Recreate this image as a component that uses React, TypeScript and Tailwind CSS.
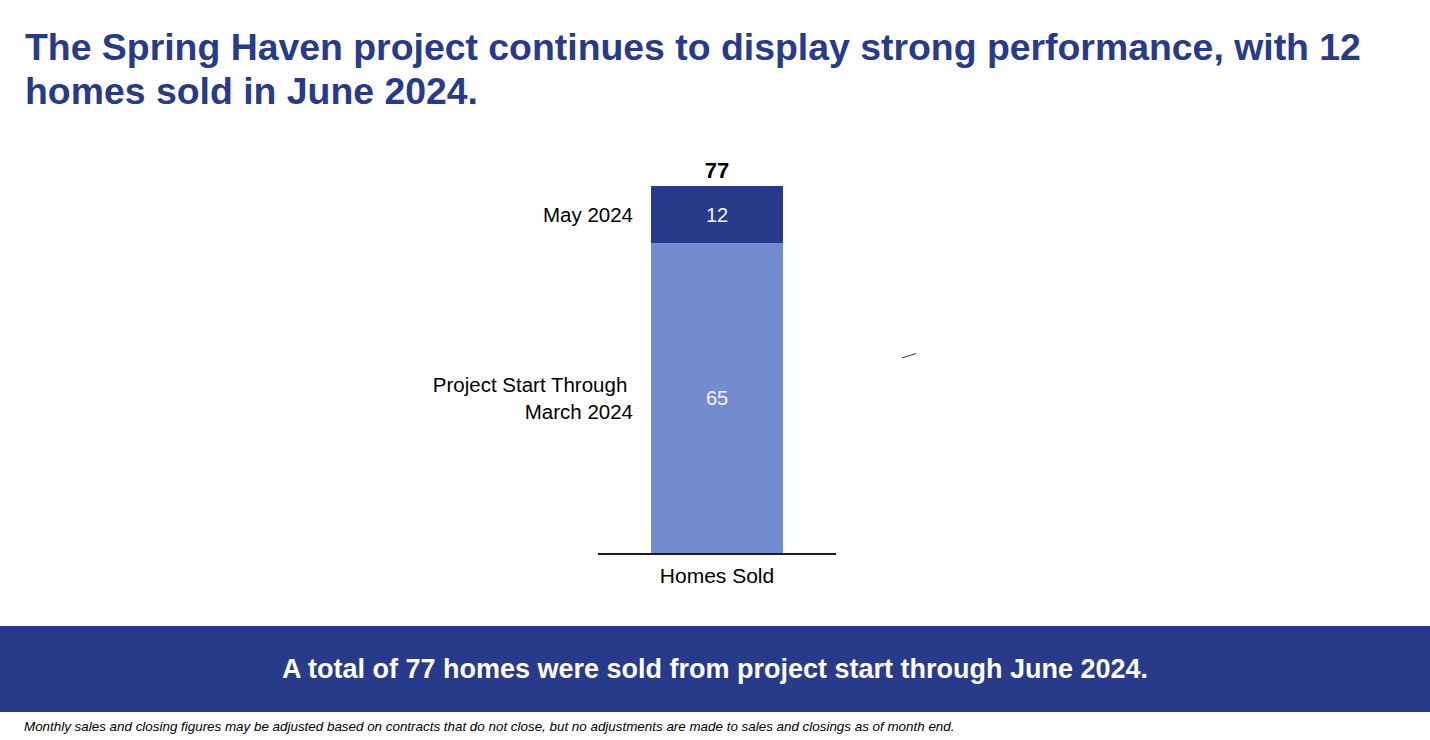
const NAVY = "text-[#283a8a]";

const segments = [
  { key: "may", label: ["May 2024"], value: 12, bar: "bg-[#283a8a]" },
  { key: "start", label: ["Project Start Through\u00a0", "March 2024"], value: 65, bar: "bg-[#738ccf]" },
];

// px per home sold
const SCALE = 4.77;

function StackedBar() {
  const total = segments.reduce((s, x) => s + x.value, 0);
  return (
    <div className="relative flex flex-col items-center pt-[45px]">
      <div className="ml-[4px] flex flex-col items-center">
        <div className="text-[22px] font-bold leading-[26px] text-black">{total}</div>
        <div className="mt-[2px] flex">
          {/* left labels */}
          <div className="flex w-[200px] flex-col">
            {segments.map((s) => (
              <div
                key={s.key}
                className="flex flex-col items-end justify-center pr-[18px] text-[20.5px] leading-[27px] text-black"
                style={{ height: Math.round(s.value * SCALE) }}
              >
                {s.label.map((l) => (
                  <span key={l} className="whitespace-pre">{l}</span>
                ))}
              </div>
            ))}
          </div>
          <div className="flex w-[132px] flex-col">
            {segments.map((s) => (
              <div
                key={s.key}
                className={`flex items-center justify-center text-[20px] text-[#f4f5fb] ${s.bar}`}
                style={{ height: Math.round(s.value * SCALE) }}
              >
                {s.value}
              </div>
            ))}
          </div>
          <div className="w-[200px]" />
        </div>
        <div className="h-[2px] w-[238px] bg-[#1a1a2e]" />
        <div className="mt-[8px] text-[21px] leading-[26px] text-black">Homes Sold</div>
      </div>
      <svg className="absolute left-[901px] top-[239px]" width="16" height="8" viewBox="0 0 16 8">
        <line x1="1" y1="6" x2="15" y2="1.5" stroke="#333" strokeWidth="1" />
      </svg>
    </div>
  );
}

export default function App() {
  return (
    <div className="flex h-[740px] w-[1430px] flex-col overflow-hidden bg-white font-['Liberation_Sans',Arial,sans-serif]">
      <h1 className={`px-[25px] pt-[25px] text-[37.4px] font-bold leading-[44px] ${NAVY}`}>
        The Spring Haven project continues to display strong performance, with 12 homes sold in June 2024.
      </h1>

      <StackedBar />

      <div className="mt-auto flex h-[86px] items-center justify-center bg-[#283a8a]">
        <p className="text-[27px] font-bold text-white">
          A total of 77 homes were sold from project start through June 2024.
        </p>
      </div>
      <p className="h-[28px] px-[24px] pt-[5px] text-[13.4px] italic text-black">
        Monthly sales and closing figures may be adjusted based on contracts that do not close, but no adjustments are made to sales and closings as of month end.
      </p>
    </div>
  );
}
